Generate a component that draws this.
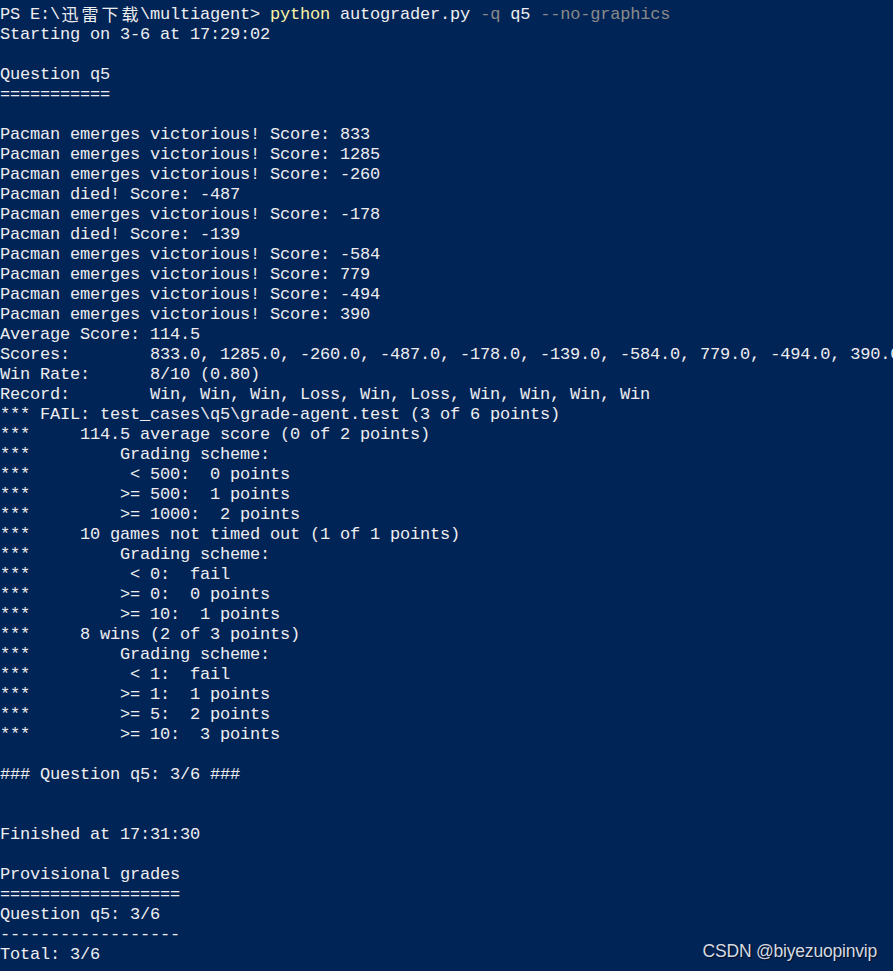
const lines: string[] = [
  '',
  'Starting on 3-6 at 17:29:02',
  '',
  'Question q5',
  '===========',
  '',
  'Pacman emerges victorious! Score: 833',
  'Pacman emerges victorious! Score: 1285',
  'Pacman emerges victorious! Score: -260',
  'Pacman died! Score: -487',
  'Pacman emerges victorious! Score: -178',
  'Pacman died! Score: -139',
  'Pacman emerges victorious! Score: -584',
  'Pacman emerges victorious! Score: 779',
  'Pacman emerges victorious! Score: -494',
  'Pacman emerges victorious! Score: 390',
  'Average Score: 114.5',
  'Scores:        833.0, 1285.0, -260.0, -487.0, -178.0, -139.0, -584.0, 779.0, -494.0, 390.0',
  'Win Rate:      8/10 (0.80)',
  'Record:        Win, Win, Win, Loss, Win, Loss, Win, Win, Win, Win',
  '*** FAIL: test_cases\\q5\\grade-agent.test (3 of 6 points)',
  '***     114.5 average score (0 of 2 points)',
  '***         Grading scheme:',
  '***          < 500:  0 points',
  '***         >= 500:  1 points',
  '***         >= 1000:  2 points',
  '***     10 games not timed out (1 of 1 points)',
  '***         Grading scheme:',
  '***          < 0:  fail',
  '***         >= 0:  0 points',
  '***         >= 10:  1 points',
  '***     8 wins (2 of 3 points)',
  '***         Grading scheme:',
  '***          < 1:  fail',
  '***         >= 1:  1 points',
  '***         >= 5:  2 points',
  '***         >= 10:  3 points',
  '',
  '### Question q5: 3/6 ###',
  '',
  '',
  'Finished at 17:31:30',
  '',
  'Provisional grades',
  '==================',
  'Question q5: 3/6',
  '------------------',
  'Total: 3/6',
]

function Cjk({ text }: { text: string }) {
  // full-width cells, two columns each
  return (
    <>
      {text.split('').map((ch, i) => (
        <span
          key={i}
          className="inline-block w-[20px] align-top text-center text-[17px] leading-[17px] font-['Noto_Sans_CJK_SC',sans-serif]"
        >
          {ch}
        </span>
      ))}
    </>
  )
}

export default function App() {
  return (
    <div className="relative h-[971px] w-[893px] overflow-hidden bg-[#012456] pt-[5px] font-['Liberation_Mono',monospace] text-[17px] tracking-[-0.2px] leading-[20px] text-[#eeedf0]">
      {lines.map((line, i) =>
        i === 0 ? (
          <div key={i} className="h-[20px] whitespace-pre">
            PS E:\<Cjk text="迅雷下载" />\multiagent&gt;{' '}
            <span className="text-[#f9f1a5]">python</span> autograder.py{' '}
            <span className="text-[#8a8a8a]">-q</span> q5{' '}
            <span className="text-[#8a8a8a]">--no-graphics</span>
          </div>
        ) : (
          <div key={i} className="h-[20px] whitespace-pre">
            {line}
          </div>
        )
      )}

      {/* watermark */}
      <div className="absolute bottom-[9px] right-[16px] font-['Liberation_Sans',sans-serif] text-[17.5px] leading-[22px] text-[#d6dae2] [text-shadow:1px_1px_1px_rgba(0,0,0,0.6)]">
        CSDN @biyezuopinvip
      </div>
    </div>
  )
}
